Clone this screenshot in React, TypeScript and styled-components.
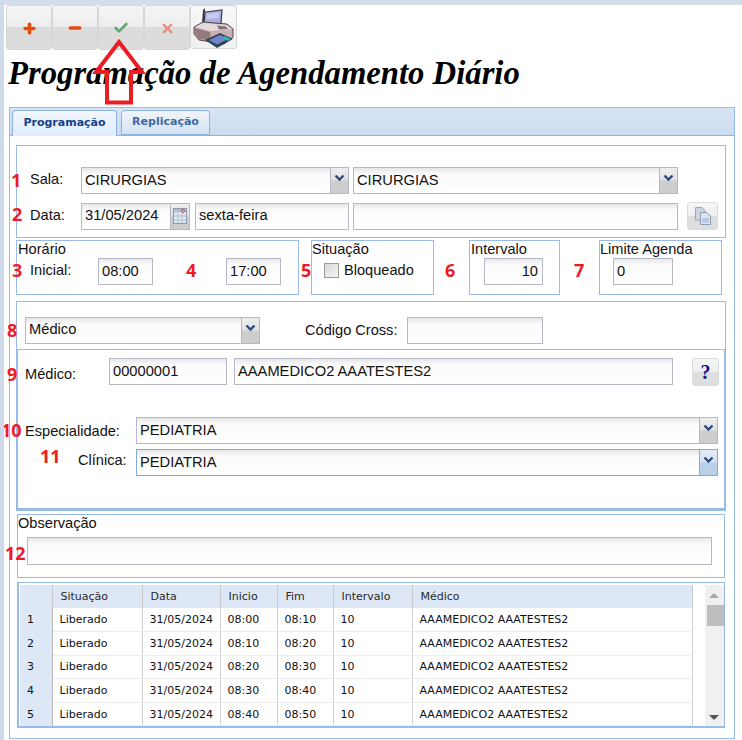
import React from 'react';
import styled, { createGlobalStyle } from 'styled-components';
import { Check, Minus, Plus, X } from 'lucide-react';

const GlobalStyle = createGlobalStyle`
    html, body {
        margin: 0;
        padding: 0;
        background: white;
    }
    * {
        box-sizing: border-box;
    }
`
const Page = styled.div`
    position: relative;
    width: 742px;
    height: 740px;
    overflow: hidden;
    background: white;
    border-top: 5px solid #d3deec;
    border-left: 4px solid #cfdbeb;
    font-family: "Liberation Sans", Arial, sans-serif;
    font-size: 14.6px;
    color: #111;
`
const Toolbar = styled.div`
    display: flex;
    padding-left: 2px;
    height: 46px;
`
const ToolButton = styled.button<{ $wide?: boolean }>`
    width: ${p => (p.$wide ? '47px' : '46px')};
    height: ${p => (p.$wide ? '44px' : '45px')};
    padding: 0;
    display: flex;
    align-items: center;
    justify-content: center;
    border: 1px solid #d6d6d6;
    border-radius: 3px;
    background: ${p => (p.$wide
        ? 'linear-gradient(#f8f8f8, #f0f0f0)'
        : 'linear-gradient(#f6f6f6 0%, #ececec 50%, #dcdcdc 50%, #dcdcdc 100%)')};
    svg {
        margin-top: ${p => (p.$wide ? '0' : '1px')};
    }
`
const Title = styled.h1`
    margin: 0;
    padding-left: 4px;
    height: 56px;
    font-family: "Liberation Serif", "Times New Roman", serif;
    font-style: italic;
    font-weight: bold;
    font-size: 32.7px;
    line-height: 44px;
    color: #000;
    white-space: nowrap;
`
const TabPanel = styled.div`
    margin-left: 5px;
    width: 726px;
    height: 632px;
    border: 1px solid #99bbe8;
`
const TabStrip = styled.div`
    display: flex;
    align-items: flex-end;
    gap: 4px;
    height: 28px;
    padding-left: 2px;
    background: linear-gradient(#d8e4f3, #cbdbef);
    border-bottom: 1px solid #8db2e3;
`
const Tab = styled.div<{ $active?: boolean }>`
    width: ${p => (p.$active ? '105px' : '89px')};
    height: ${p => (p.$active ? '26px' : '25px')};
    margin-bottom: ${p => (p.$active ? '-1px' : '0')};
    padding-bottom: 3px;
    display: flex;
    align-items: center;
    justify-content: center;
    border: 1px solid #8db2e3;
    border-bottom: ${p => (p.$active ? 'none' : '1px solid #8db2e3')};
    border-radius: 4px 4px 0 0;
    background: ${p => (p.$active ? 'linear-gradient(#f2f7fe, #deecfd)' : 'linear-gradient(#f0f5fb, #d5e2f3)')};
    font-family: "DejaVu Sans", Tahoma, sans-serif;
    font-size: 11px;
    font-weight: bold;
    color: ${p => (p.$active ? '#15428b' : '#416aa3')};
`
const TabBody = styled.div`
    padding: 9px 0 0 6px;
`
const Group = styled.div`
    border: 1px solid #99bbe8;
    background: white;
`
const SalaGroup = styled(Group)`
    width: 710px;
    height: 93px;
    padding: 21px 0 0 13px;
`
const Row = styled.div`
    display: flex;
    align-items: center;
`
const DataRow = styled(Row)`
    margin-top: 8px;
`
const Label = styled.span<{ $w?: number; $up?: number }>`
    width: ${p => (p.$w ? `${p.$w}px` : 'auto')};
    flex: none;
    white-space: nowrap;
    margin-top: ${p => (p.$up ? `-${p.$up}px` : '0')};
`
const Field = styled.input<{ $w: number; $right?: boolean }>`
    width: ${p => p.$w}px;
    height: 27px;
    flex: none;
    padding: 0 ${p => (p.$right ? '4px' : '3px')} 2px 3px;
    border: 1px solid #b5b8c8;
    outline: none;
    background: linear-gradient(#e6e6e6 0, #fbfbfb 6px, #fff 100%);
    font-family: "Liberation Sans", Arial, sans-serif;
    font-size: 14.7px;
    color: #111;
    text-align: ${p => (p.$right ? 'right' : 'left')};
`
const ObsField = styled(Field)`
    height: 28px;
`
const ComboWrap = styled.div<{ $w: number }>`
    display: flex;
    width: ${p => p.$w}px;
    height: 27px;
    flex: none;
`
const ComboField = styled(Field)<{ $focus?: boolean }>`
    flex: 1;
    width: auto;
    min-width: 0;
    border-color: ${p => (p.$focus ? '#7eadd9' : '#b5b8c8')};
    border-right: none;
`
const Trigger = styled.div<{ $focus?: boolean }>`
    width: 19px;
    height: 27px;
    flex: none;
    display: flex;
    justify-content: center;
    padding-top: 6px;
    border: 1px solid ${p => (p.$focus ? '#7eadd9' : '#b5b8c8')};
    background: ${p => (p.$focus
        ? 'linear-gradient(#e3edf8 0%, #d4e3f3 45%, #b9d0e9 55%, #b9d0e9 100%)'
        : 'linear-gradient(#eeeeee 0%, #e2e2e2 45%, #cdcdcd 55%, #cdcdcd 100%)')};
`
const CalendarTrigger = styled(Trigger)`
    width: 20px;
    padding-top: 4px;
`
const SmallButton = styled.button<{ $w: number }>`
    width: ${p => p.$w}px;
    height: 28px;
    flex: none;
    padding: 0;
    display: flex;
    align-items: center;
    justify-content: center;
    border: 1px solid #dcdcdc;
    border-radius: 3px;
    background: linear-gradient(#f6f6f6 0%, #eeeeee 50%, #dedede 50%, #dedede 100%);
`
const HelpMark = styled.span`
    font-family: "Liberation Serif", "Times New Roman", serif;
    font-size: 20px;
    font-weight: bold;
    color: #14148c;
    line-height: 1;
`
const Spacer = styled.span<{ $w?: number }>`
    width: ${p => p.$w ?? 4}px;
    flex: none;
`
const TimeRow = styled.div`
    display: flex;
    margin-top: 2px;
`
const TimeGroup = styled(Group)<{ $w: number; $left?: number }>`
    width: ${p => p.$w}px;
    height: 55px;
    margin-left: ${p => p.$left ?? 0}px;
`
const GroupTitle = styled.div<{ $pad?: number }>`
    height: 18px;
    line-height: 17px;
    padding-left: ${p => p.$pad ?? 0}px;
    white-space: nowrap;
`
const GroupRow = styled(Row)<{ $pad: number; $top?: number }>`
    padding-left: ${p => p.$pad}px;
    margin-top: ${p => p.$top ?? -1}px;
`
const CheckBox = styled.span`
    width: 15px;
    height: 15px;
    margin-right: 5px;
    flex: none;
    border: 1px solid #9a9a9a;
    background: linear-gradient(135deg, #d8d8d8, #f6f6f6);
`
const ProfGroup = styled(Group)`
    width: 710px;
    height: 210px;
    margin-top: 6px;
`
const ProfTop = styled(Row)`
    height: 47px;
    padding: 9px 0 0 8px;
`
const Inner = styled.div`
    width: 708px;
    height: 161px;
    border: 1px solid #99bbe8;
    border-bottom-width: 2px;
`
const MedicoRow = styled.div`
    display: flex;
    align-items: flex-start;
    padding: 8px 0 0 7px;
    height: 67px;
`
const MedicoLabel = styled(Label)`
    padding-top: 8px;
`
const ComboRow = styled(Row)<{ $top?: number }>`
    margin-top: ${p => p.$top ?? 0}px;
    padding-left: 7px;
`
const ClinicaLabel = styled(Label)`
    padding-left: 53px;
    margin-top: -6px;
`
const ObsGroup = styled(Group)`
    width: 708px;
    height: 64px;
    margin: 3px 0 0 1px;
    padding-left: 9px;
`
const ObsTitle = styled.div`
    height: 22px;
    margin-left: -9px;
    line-height: 17px;
`
const GridBox = styled.div`
    display: flex;
    width: 708px;
    height: 146px;
    margin: 4px 0 0 1px;
    border: 1px solid #99bbe8;
    border-bottom-width: 2px;
    border-left-width: 2px;
    padding: 2px 2px 0 1px;
`
const GridTable = styled.table`
    width: 672px;
    height: 141px;
    flex: none;
    table-layout: fixed;
    border-collapse: collapse;
    font-family: "DejaVu Sans", Tahoma, sans-serif;
    font-size: 11px;
    color: #111;
`
const HeadCell = styled.th`
    height: 23px;
    padding: 0 0 1px 8px;
    background: #dde7f5;
    border-right: 1px solid #c8c8c8;
    font-weight: normal;
    text-align: left;
    color: #2a2a2a;
`
const Cell = styled.td`
    height: 23.6px;
    padding: 0 0 0 7px;
    border-right: 1px solid #d0d0d0;
    border-bottom: 1px solid #ececec;
    white-space: nowrap;
`
const NumCell = styled.td`
    padding: 0 0 0 7px;
    background: #dde7f5;
    border-right: 1px solid #b8b8b8;
`
const ScrollTrack = styled.div`
    width: 19px;
    margin-left: 12px;
    flex: none;
    display: flex;
    flex-direction: column;
    align-items: center;
    justify-content: space-between;
    background: #f0f0f0;
    padding: 8px 0 6px;
    position: relative;
`
const ScrollThumb = styled.div`
    position: absolute;
    top: 20px;
    left: 2px;
    width: 17px;
    height: 21px;
    background: #bdbdbd;
`
const ArrowUp = styled.div`
    width: 0;
    height: 0;
    border-left: 5px solid transparent;
    border-right: 5px solid transparent;
    border-bottom: 5px solid #a8a8a8;
`
const ArrowDown = styled.div`
    width: 0;
    height: 0;
    border-left: 5px solid transparent;
    border-right: 5px solid transparent;
    border-top: 5px solid #555;
`
const Marker = styled.span<{ $x: number; $y: number }>`
    position: absolute;
    left: ${p => p.$x - 4}px;
    top: ${p => p.$y}px;
    font-family: "Open Sans", "Liberation Sans", sans-serif;
    font-size: 18px;
    font-weight: bold;
    line-height: 20px;
    color: #ed1c24;
`
const RedArrow = styled.svg`
    position: absolute;
    left: 86px;
    top: 33px;
`

const Chevron: React.FC = () => (
    <svg width="11" height="8" viewBox="0 0 11 8">
        <path d="M1.5 1.5 L5.5 5.5 L9.5 1.5" fill="none" stroke="#2f4a80" strokeWidth="2.4" />
    </svg>
);

const Combo: React.FC<{ w: number; value: string; focus?: boolean }> = ({ w, value, focus }) => (
    <ComboWrap $w={w}>
        <ComboField $w={0} $focus={focus} readOnly value={value} />
        <Trigger $focus={focus}><Chevron /></Trigger>
    </ComboWrap>
);

const PrinterIcon: React.FC = () => (
    <svg width="42" height="43" viewBox="0 0 42 43">
        <path d="M10 4 L12 2 L11 18 L9 18 Z" fill="#2e2e34" />
        <path d="M12 6 L29 4 L28 18 L11 18 Z" fill="#a9afe0" stroke="#3f3f4e" strokeWidth="1.2" />
        <path d="M14 8 L26 6.5 L25.5 12 L13.5 13 Z" fill="#c8cdf0" />
        <path d="M1 21 L10 16 L34 18 L40 23 L40 31 L31 38 L6 34 L1 28 Z" fill="#c9b0b3" stroke="#57494d" strokeWidth="1" />
        <path d="M2 21 L10 17 L33 19 L39 23 L17 25 Z" fill="#e5dadb" />
        <path d="M24 19.5 L33 20.5 L35 23 L26 23.5 Z" fill="#7b7478" />
        <path d="M2 22 L17 26 L18 34 L6 33 L2 27 Z" fill="#94797d" />
        <path d="M12 34 L27 27 L40 33 L24 42 Z" fill="#2f4558" />
        <path d="M16 34 L27 29 L35 33 L24 38.5 Z" fill="#7383cc" />
        <path d="M31 30 L38 33 L35 35 L29 32 Z" fill="#35b6b4" />
    </svg>
);

const CalendarIcon: React.FC = () => (
    <svg width="14" height="16" viewBox="0 0 14 16">
        <rect x="0.5" y="0.5" width="13" height="15" fill="#dfe6ef" stroke="#8a99ad" />
        <rect x="1" y="1" width="12" height="3" fill="#aebfd4" />
        <path d="M1 8H13M1 12H13M5 4V15M9 4V15" stroke="#b6c2d2" />
        <circle cx="10" cy="3" r="1.4" fill="#fff" stroke="#b23a3a" />
    </svg>
);

const CopyIcon: React.FC = () => (
    <svg width="18" height="20" viewBox="0 0 18 20">
        <path d="M1.5 1.5H8L11 4.5V14H1.5Z" fill="#cfd6df" stroke="#9aa6b5" />
        <path d="M6.5 6.5H13L16.5 10V18.5H6.5Z" fill="#dbe3ee" stroke="#8f9db0" />
        <rect x="8" y="12" width="7" height="5" fill="#b8cbe2" />
    </svg>
);

const columns = [32, 90, 78, 57, 56, 79, 280];
const headers = ['', 'Situação', 'Data', 'Inicio', 'Fim', 'Intervalo', 'Médico'];
const rows = [
    ['1', '08:00', '08:10'],
    ['2', '08:10', '08:20'],
    ['3', '08:20', '08:30'],
    ['4', '08:30', '08:40'],
    ['5', '08:40', '08:50'],
];
const markers: [string, number, number][] = [
    ['1', 11, 165], ['2', 12, 199], ['3', 12, 255], ['4', 186, 255], ['5', 301, 255],
    ['6', 445, 255], ['7', 574, 255], ['8', 7, 315], ['9', 7, 359], ['10', 1, 415],
    ['11', 40, 441], ['12', 5, 538],
];

export default function App() {
    return (
        <Page>
            <GlobalStyle />
            <Toolbar>
                <ToolButton aria-label="Novo"><Plus size={15} color="#e8490f" strokeWidth={5.5} /></ToolButton>
                <ToolButton aria-label="Excluir"><Minus size={16} color="#e8490f" strokeWidth={5.5} /></ToolButton>
                <ToolButton aria-label="Salvar"><Check size={16} color="#5fa772" strokeWidth={4} /></ToolButton>
                <ToolButton aria-label="Cancelar"><X size={15} color="#e58a80" strokeWidth={3.6} /></ToolButton>
                <ToolButton $wide aria-label="Imprimir"><PrinterIcon /></ToolButton>
            </Toolbar>
            <Title>Programação de Agendamento Diário</Title>
            <TabPanel>
                <TabStrip>
                    <Tab $active>Programação</Tab>
                    <Tab>Replicação</Tab>
                </TabStrip>
                <TabBody>
                    <SalaGroup>
                        <Row>
                            <Label $w={51} $up={3}>Sala:</Label>
                            <Combo w={268} value="CIRURGIAS" />
                            <Spacer />
                            <Combo w={325} value="CIRURGIAS" />
                        </Row>
                        <DataRow>
                            <Label $w={51} $up={3}>Data:</Label>
                            <ComboWrap $w={109}>
                                <ComboField $w={0} readOnly value="31/05/2024" />
                                <CalendarTrigger><CalendarIcon /></CalendarTrigger>
                            </ComboWrap>
                            <Spacer $w={5} />
                            <Field $w={154} readOnly value="sexta-feira" />
                            <Spacer />
                            <Field $w={325} readOnly value="" />
                            <Spacer $w={9} />
                            <SmallButton $w={31} aria-label="Copiar"><CopyIcon /></SmallButton>
                        </DataRow>
                    </SalaGroup>
                    <TimeRow>
                        <TimeGroup $w={283}>
                            <GroupTitle $pad={1}>Horário</GroupTitle>
                            <GroupRow $pad={13}>
                                <Label $w={68} $up={3}>Inicial:</Label>
                                <Field $w={55} readOnly value="08:00" />
                                <Spacer $w={73} />
                                <Field $w={55} readOnly value="17:00" />
                            </GroupRow>
                        </TimeGroup>
                        <TimeGroup $w={123} $left={12}>
                            <GroupTitle>Situação</GroupTitle>
                            <GroupRow $pad={12} $top={4}>
                                <CheckBox />
                                <Label $up={2}>Bloqueado</Label>
                            </GroupRow>
                        </TimeGroup>
                        <TimeGroup $w={91} $left={35}>
                            <GroupTitle $pad={1}>Intervalo</GroupTitle>
                            <GroupRow $pad={14}>
                                <Field $w={59} $right readOnly value="10" />
                            </GroupRow>
                        </TimeGroup>
                        <TimeGroup $w={123} $left={39}>
                            <GroupTitle>Limite Agenda</GroupTitle>
                            <GroupRow $pad={13}>
                                <Field $w={60} readOnly value="0" />
                            </GroupRow>
                        </TimeGroup>
                    </TimeRow>
                    <ProfGroup>
                        <ProfTop>
                            <Combo w={235} value="Médico" />
                            <Spacer $w={45} />
                            <Label $w={102}>Código Cross:</Label>
                            <Field $w={136} readOnly value="" />
                        </ProfTop>
                        <Inner>
                            <MedicoRow>
                                <MedicoLabel $w={84}>Médico:</MedicoLabel>
                                <Field $w={118} readOnly value="00000001" />
                                <Spacer $w={7} />
                                <Field $w={439} readOnly value="AAAMEDICO2 AAATESTES2" />
                                <Spacer $w={19} />
                                <SmallButton $w={27} aria-label="Ajuda"><HelpMark>?</HelpMark></SmallButton>
                            </MedicoRow>
                            <ComboRow>
                                <Label $w={111}>Especialidade:</Label>
                                <Combo w={582} value="PEDIATRIA" />
                            </ComboRow>
                            <ComboRow $top={5}>
                                <ClinicaLabel $w={111}>Clínica:</ClinicaLabel>
                                <Combo w={582} value="PEDIATRIA" focus />
                            </ComboRow>
                        </Inner>
                    </ProfGroup>
                    <ObsGroup>
                        <ObsTitle>Observação</ObsTitle>
                        <ObsField $w={685} readOnly value="" />
                    </ObsGroup>
                    <GridBox>
                        <GridTable>
                            <colgroup>
                                {columns.map((w, i) => <col key={i} width={w} />)}
                            </colgroup>
                            <thead>
                                <tr>{headers.map((h, i) => <HeadCell key={i}>{h}</HeadCell>)}</tr>
                            </thead>
                            <tbody>
                                {rows.map(r => (
                                    <tr key={r[0]}>
                                        <NumCell>{r[0]}</NumCell>
                                        <Cell>Liberado</Cell>
                                        <Cell>31/05/2024</Cell>
                                        <Cell>{r[1]}</Cell>
                                        <Cell>{r[2]}</Cell>
                                        <Cell>10</Cell>
                                        <Cell>AAAMEDICO2 AAATESTES2</Cell>
                                    </tr>
                                ))}
                            </tbody>
                        </GridTable>
                        <ScrollTrack>
                            <ArrowUp />
                            <ScrollThumb />
                            <ArrowDown />
                        </ScrollTrack>
                    </GridBox>
                </TabBody>
            </TabPanel>
            {markers.map(([n, x, y]) => <Marker key={n} $x={x} $y={y}>{n}</Marker>)}
            <RedArrow width="58" height="72" viewBox="0 0 58 72">
                <path d="M29 4 L52 34 L41 34 L41 64.5 L17 64.5 L17 34 L6 34 Z" fill="none" stroke="#ed1c24" strokeWidth="4" />
            </RedArrow>
        </Page>
    );
}
